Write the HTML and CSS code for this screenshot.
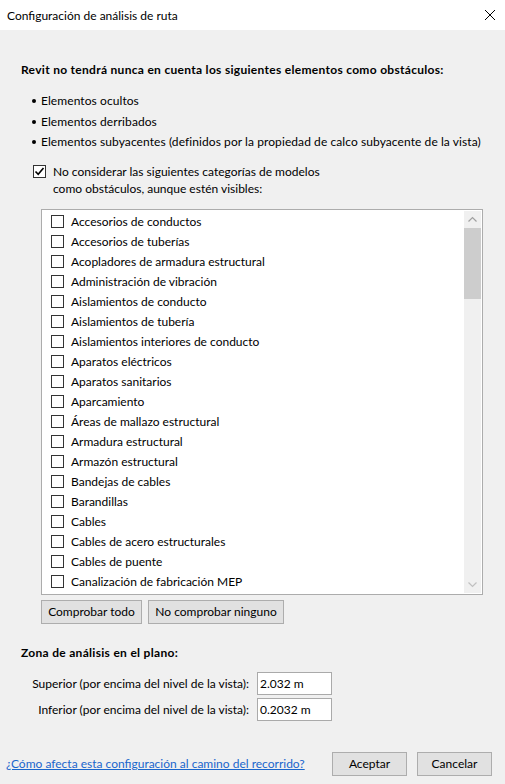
FILE: index.html
```html
<!DOCTYPE html>
<html lang="es">
<head>
<meta charset="utf-8">
<title>Configuración de análisis de ruta</title>
<link rel="stylesheet" href="styles.css">
</head>
<body>
<div class="window">
  <div class="titlebar">
    <span class="title">Configuración de análisis de ruta</span>
    <svg class="close" width="12" height="12" viewBox="0 0 12 12"><path d="M1 1L11 11M11 1L1 11" stroke="#000" stroke-width="1"/></svg>
  </div>
  <div class="body">
    <div class="heading">Revit no tendrá nunca en cuenta los siguientes elementos como obstáculos:</div>
    <ul class="bullets">
      <li>Elementos ocultos</li>
      <li>Elementos derribados</li>
      <li>Elementos subyacentes (definidos por la propiedad de calco subyacente de la vista)</li>
    </ul>
    <label class="mainchk">
      <span class="cb checked"><svg width="11" height="11" viewBox="0 0 11 11"><path d="M1.5 5.5L4.2 8.3L9.5 2" fill="none" stroke="#000" stroke-width="1.6"/></svg></span>
      <span class="mainchk-text">No considerar las siguientes categorías de modelos<br>como obstáculos, aunque estén visibles:</span>
    </label>
    <div class="listbox">
      <div class="items">
        <div class="item"><span class="cb"></span>Accesorios de conductos</div>
        <div class="item"><span class="cb"></span>Accesorios de tuberías</div>
        <div class="item"><span class="cb"></span>Acopladores de armadura estructural</div>
        <div class="item"><span class="cb"></span>Administración de vibración</div>
        <div class="item"><span class="cb"></span>Aislamientos de conducto</div>
        <div class="item"><span class="cb"></span>Aislamientos de tubería</div>
        <div class="item"><span class="cb"></span>Aislamientos interiores de conducto</div>
        <div class="item"><span class="cb"></span>Aparatos eléctricos</div>
        <div class="item"><span class="cb"></span>Aparatos sanitarios</div>
        <div class="item"><span class="cb"></span>Aparcamiento</div>
        <div class="item"><span class="cb"></span>Áreas de mallazo estructural</div>
        <div class="item"><span class="cb"></span>Armadura estructural</div>
        <div class="item"><span class="cb"></span>Armazón estructural</div>
        <div class="item"><span class="cb"></span>Bandejas de cables</div>
        <div class="item"><span class="cb"></span>Barandillas</div>
        <div class="item"><span class="cb"></span>Cables</div>
        <div class="item"><span class="cb"></span>Cables de acero estructurales</div>
        <div class="item"><span class="cb"></span>Cables de puente</div>
        <div class="item"><span class="cb"></span>Canalización de fabricación MEP</div>
      </div>
      <div class="scrollbar">
        <svg class="arrow" width="17" height="17" viewBox="0 0 17 17"><path d="M4.5 10.5L8.5 6.5L12.5 10.5" fill="none" stroke="#a0a0a0" stroke-width="1.2"/></svg>
        <div class="track"><div class="thumb"></div></div>
        <svg class="arrow" width="17" height="17" viewBox="0 0 17 17"><path d="M4.5 6.5L8.5 10.5L12.5 6.5" fill="none" stroke="#c0c0c0" stroke-width="1.2"/></svg>
      </div>
    </div>
    <div class="listbtns">
      <button class="btn btn-all">Comprobar todo</button>
      <button class="btn btn-none">No comprobar ninguno</button>
    </div>
    <div class="heading heading2">Zona de análisis en el plano:</div>
    <div class="zone">
      <span class="zlabel">Superior (por encima del nivel de la vista):</span>
      <span class="zinput">2.032 m</span>
      <span class="zlabel">Inferior (por encima del nivel de la vista):</span>
      <span class="zinput">0.2032 m</span>
    </div>
    <div class="footer">
      <a class="link" href="#">¿Cómo afecta esta configuración al camino del recorrido?</a>
      <div class="footbtns">
        <button class="btn btn-ok">Aceptar</button>
        <button class="btn btn-cancel">Cancelar</button>
      </div>
    </div>
  </div>
</div>
</body>
</html>
```

FILE: styles.css
```css
* { box-sizing: border-box; }
html, body { margin: 0; padding: 0; }
body {
  width: 505px;
  height: 784px;
  overflow: hidden;
  background: #f0f0f0;
  font-family: "Segoe UI", Lato, "Noto Sans", sans-serif;
  font-size: 12px;
  color: #000;
}
.window { width: 505px; height: 784px; display: flex; flex-direction: column; }
.titlebar {
  height: 30px;
  background: #fff;
  display: flex;
  align-items: center;
  justify-content: space-between;
  padding: 0 8px 0 7px;
}
.title { font-size: 12px; }
.close { margin-right: 1px; }
.body { flex: 1; display: flex; flex-direction: column; padding: 0 0 0 21px; }
.heading { font-weight: bold; margin-top: 32px; height: 16px; line-height: 16px; letter-spacing: 0.3px; }
.bullets { list-style: none; margin: 14px 0 0 0; padding: 0 0 0 11px; }
.bullets li { position: relative; height: 20.5px; line-height: 17px; padding-left: 9px; letter-spacing: 0.08px; }
.bullets li::before {
  content: "";
  position: absolute;
  left: 0;
  top: 7px;
  width: 4px;
  height: 4px;
  border-radius: 50%;
  background: #000;
}
.mainchk { display: flex; align-items: flex-start; margin: 9px 0 0 12px; }
.mainchk-text { line-height: 17px; margin-left: 7px; }
.cb {
  width: 13px;
  height: 13px;
  border: 1px solid #333;
  background: #fff;
  display: inline-flex;
  align-items: center;
  justify-content: center;
  flex: none;
}
.mainchk .cb { margin-top: 2px; }
.listbox {
  margin: 12px 0 0 20px;
  width: 442px;
  height: 386px;
  border: 1px solid #acacac;
  background: #fff;
  display: flex;
  overflow: hidden;
}
.items { flex: 1; padding-top: 2px; overflow: hidden; }
.item { height: 20px; display: flex; align-items: center; padding-left: 9px; }
.item .cb { margin-right: 7px; }
.scrollbar {
  width: 17px;
  margin: 1px 1px 1px 0;
  background: #f0f0f0;
  display: flex;
  flex-direction: column;
}
.arrow { flex: none; display: block; }
.track { flex: 1; }
.thumb { height: 71px; background: #cdcdcd; margin-top: 0; }
.listbtns { display: flex; gap: 6px; margin: 5px 0 0 20px; }
.btn {
  font: inherit;
  font-size: 12px;
  background: #e1e1e1;
  border: 1px solid #adadad;
  height: 24px;
  padding: 0;
  color: #000;
}
.btn-all { width: 101px; }
.btn-none { width: 136px; }
.heading2 { margin-top: 21px; }
.zone {
  display: grid;
  grid-template-columns: 228px 75px;
  column-gap: 8px;
  row-gap: 3px;
  margin-top: 11px;
}
.zlabel { text-align: right; line-height: 23px; }
.zinput {
  height: 23px;
  line-height: 21px;
  border: 1px solid #aaa;
  background: #fff;
  padding-left: 2px;
}
.footer {
  margin: 31px 0 0 -15px;
  display: flex;
  align-items: center;
  justify-content: space-between;
  padding-right: 13px;
}
.link { color: #1a66cc; text-decoration: underline; }
.footbtns { display: flex; gap: 10px; }
.btn-ok, .btn-cancel { width: 75px; }
```
